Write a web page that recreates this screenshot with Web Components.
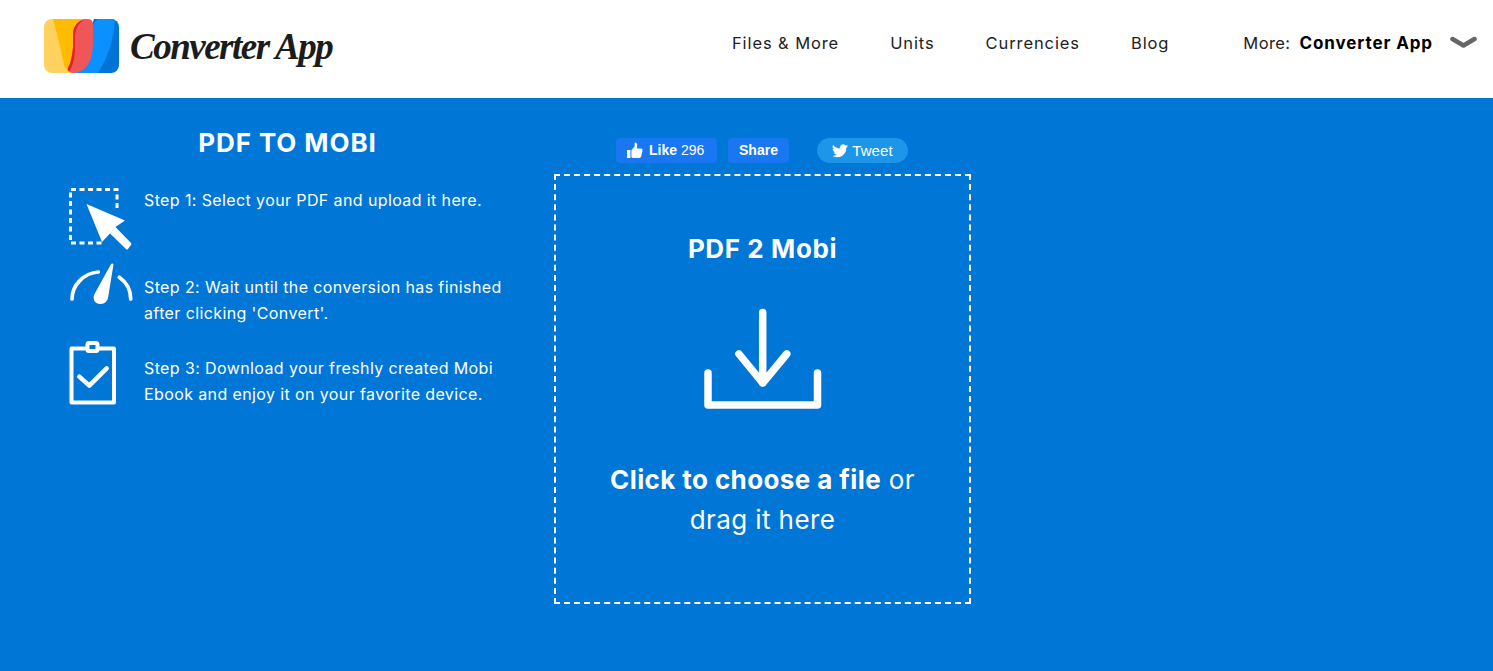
<!DOCTYPE html>
<html><head><meta charset="utf-8"><style>
html,body{margin:0;padding:0;height:100%}
body{font-family:Inter,"Open Sans",sans-serif;background:#0076d7;overflow:hidden}
</style></head><body>
<app-header></app-header>
<main-area></main-area>
<script>
function def(name,html){customElements.define(name,class extends HTMLElement{constructor(){super();this.attachShadow({mode:'open'}).innerHTML=html}})}
def('app-logo',`<style>:host{display:flex;align-items:center;gap:11px}
svg{display:block;flex:none}
span{font:italic 700 37px/1 "Liberation Serif",serif;color:#1c1c1c;letter-spacing:-1.5px;white-space:nowrap}</style>
<svg width="75" height="54" viewBox="0 0 75 54"><defs><clipPath id="c"><rect width="75" height="54" rx="8"/></clipPath></defs>
<g clip-path="url(#c)">
<path d="M0 0H40V54H0Z" fill="#ffd25f"/>
<path d="M9 0H40V30L24 50Q21 50 20 46Q16 26 9 0Z" fill="#ffbb00"/>
<path d="M50 0H75V54H30Z" fill="#0074d6"/>
<path d="M54 0H71C70 22 63 40 54 54H30L44 30L48 10Q50 2 54 0Z" fill="#0a90ff"/>
<path d="M41 0H44Q49 0 49 6V22C49 40 44 54 28 54Q22 52 24 49Q28 42 29 28V14Q30 3 41 0Z" fill="#f05658"/>
<path d="M41 0Q30 3 29 14V28Q28 42 24 49Q23 51 25 52.500Q30 46 31 32V16Q32 5 41 0Z" fill="#e3211f"/>
</g></svg><span>Converter App</span>`);
def('nav-link',`<style>:host{display:block;font-size:16.5px;color:#222;white-space:nowrap;letter-spacing:.9px}</style><slot></slot>`);
def('app-header',`<style>:host{display:flex;align-items:center;height:98px;background:#fff;padding:0 16px 0 44px;box-sizing:border-box}
.nav{margin-left:auto;display:flex;align-items:center;gap:51px;margin-top:-12px}
.more{display:flex;align-items:center;margin-left:23px;font-size:16.5px;color:#222;white-space:nowrap;letter-spacing:.4px}
b{color:#000;font-size:17px;font-weight:700;margin-left:9px;letter-spacing:.9px}
svg{margin-left:17px;display:block}</style>
<app-logo style="margin-top:-6px"></app-logo>
<div class="nav"><nav-link>Files &amp; More</nav-link><nav-link>Units</nav-link><nav-link>Currencies</nav-link><nav-link>Blog</nav-link>
<div class="more">More:<b>Converter App</b><svg width="27" height="14" viewBox="0 0 27 14"><path d="M2.500 3L13.500 9.500L24.500 3" fill="none" stroke="#666" stroke-width="4.500" stroke-linecap="round" stroke-linejoin="round"/></svg></div></div>`);
def('step-row',`<style>:host{display:flex;color:#fff;font-size:16px;line-height:26px}
.i{width:75px;flex:none;display:flex;align-items:flex-start}p{margin:0;width:365px;letter-spacing:.39px}</style><div class="i"><slot name="icon"></slot></div><p><slot></slot></p>`);
def('social-bar',`<style>:host{display:flex;align-items:center;height:25px;margin-left:62px;font:700 14px/25px "Liberation Sans",Arial,sans-serif;color:#fff}
.b{height:25px;border-radius:4px;background:#1a77f2;display:flex;align-items:center;box-sizing:border-box;white-space:nowrap}
.l{width:101px;padding-left:10px;margin-right:11px}.s{width:61px;justify-content:center}
.t{width:91px;margin-left:28px;background:#1d95e8;border-radius:13px;justify-content:center;font-weight:400;font-size:15px;letter-spacing:.1px;line-height:24px}
svg{display:block}i{font-style:normal;font-weight:400;margin-left:4px}</style>
<div class="b l"><svg width="17" height="17" viewBox="0 0 17 17" style="margin-right:6px"><path d="M1 8h3.400v8H1zM5.400 8.200L8.600 4.400V1.400Q8.600.4 9.800.6 11.600 1.200 11.200 4L10.800 6.400H15.200Q16.900 6.600 16.500 8.400L15.200 14.600Q14.800 16 13.200 16H7.400Q6.400 16 5.400 15.200Z" fill="#fff"/></svg>Like<i>296</i></div>
<div class="b s">Share</div>
<div class="b t"><svg width="16" height="14" viewBox="0 0 24 20" style="margin-right:4px"><path d="M24 2.400c-.9.400-1.800.7-2.800.8 1-.6 1.800-1.600 2.200-2.700-1 .6-2 1-3.100 1.200A4.900 4.900 0 0 0 11.900 6.200 14 14 0 0 1 1.700.9a4.900 4.900 0 0 0 1.500 6.600c-.8 0-1.600-.2-2.200-.6v.1c0 2.400 1.700 4.400 3.900 4.800-.7.200-1.500.2-2.200.1.600 2 2.400 3.400 4.600 3.400A9.900 9.900 0 0 1 0 17.300 14 14 0 0 0 7.500 19.500c9.100 0 14-7.500 14-14v-.6c1-.7 1.800-1.600 2.500-2.500z" fill="#fff"/></svg>Tweet</div>`);
def('drop-zone',`<style>:host{display:flex;flex-direction:column;align-items:center;width:417px;height:430px;box-sizing:border-box;border:2px dashed #fff;color:#fff;margin-top:11px;text-align:center}
h2{margin:57px 0 0;font-size:26px;line-height:32px;font-weight:700;letter-spacing:.6px}
svg{display:block;margin-top:43px}
p{margin:50px 0 0;font-size:26px;line-height:40px;width:340px;letter-spacing:.4px}b{font-weight:700}span{display:block}</style>
<h2>PDF 2 Mobi</h2>
<svg width="118" height="102" viewBox="0 0 118 102"><path d="M58.700 4.500V75M35 46L58.700 75L82.700 46M4 65V97H113.500V65" fill="none" stroke="#fff" stroke-width="7.500" stroke-linecap="round" stroke-linejoin="round"/></svg>
<p><b>Click to choose a file</b> or<span>drag it here</span></p>`);
def('main-area',`<style>:host{display:flex;align-items:flex-start;padding:0 0 0 69px}
.left{width:485px;flex:none;box-sizing:border-box}
h1{margin:29px 0 0;width:437px;text-align:center;color:#fff;font-size:26px;line-height:32px;font-weight:700;letter-spacing:.9px}
.steps{display:flex;flex-direction:column;margin-top:28px}
.center{display:flex;flex-direction:column;padding-top:40px}
svg{display:block}
step-row:nth-child(1){height:76px}step-row:nth-child(2){height:81px}
span{padding-top:11px;display:block}
</style>
<div class="left"><h1>PDF TO MOBI</h1><div class="steps">
<step-row><svg slot="icon" width="64" height="64" viewBox="0 0 64 64"><path d="M48 21V2.500H1.500V56H33" fill="none" stroke="#fff" stroke-width="3" stroke-dasharray="5 3.500"/><path d="M17.500 17L56 33.500L46.500 40L62 56Q63 57 62 58L59 62Q58 63 57 62L41 46.500L33 55Z" fill="#fff"/></svg>Step 1: Select your PDF and upload it here.</step-row>
<step-row><svg slot="icon" width="64" height="44" viewBox="0 0 64 44"><path d="M3 36C3 22 15 10 29.300 9M50.300 14.300C57 19 61.700 27 61.700 36" fill="none" stroke="#fff" stroke-width="3.700" stroke-linecap="round"/><path d="M44.500 1.500C44 0 42.500 0 41.800 1.500L25.500 31C23 36 26 41 31.500 41C36 41 39 38 39.500 32Z" fill="#fff"/></svg><span>Step 2: Wait until the conversion has finished after clicking 'Convert'.</span></step-row>
<step-row><svg slot="icon" width="48" height="64" viewBox="0 0 48 64" style="margin-top:-3px"><path d="M18 7.500H2.500V61.500H45V7.500H29" fill="none" stroke="#fff" stroke-width="4" stroke-linejoin="round"/><rect x="18.500" y="2" width="10" height="8" rx="1.500" fill="none" stroke="#fff" stroke-width="4"/><path d="M10.300 35.700L20.300 44.700L37.700 27.300" fill="none" stroke="#fff" stroke-width="4.500" stroke-linecap="round" stroke-linejoin="round"/></svg><span>Step 3: Download your freshly created Mobi Ebook and enjoy it on your favorite device.</span></step-row>
</div></div>
<div class="center"><social-bar></social-bar><drop-zone></drop-zone></div>`);
</script></body></html>
